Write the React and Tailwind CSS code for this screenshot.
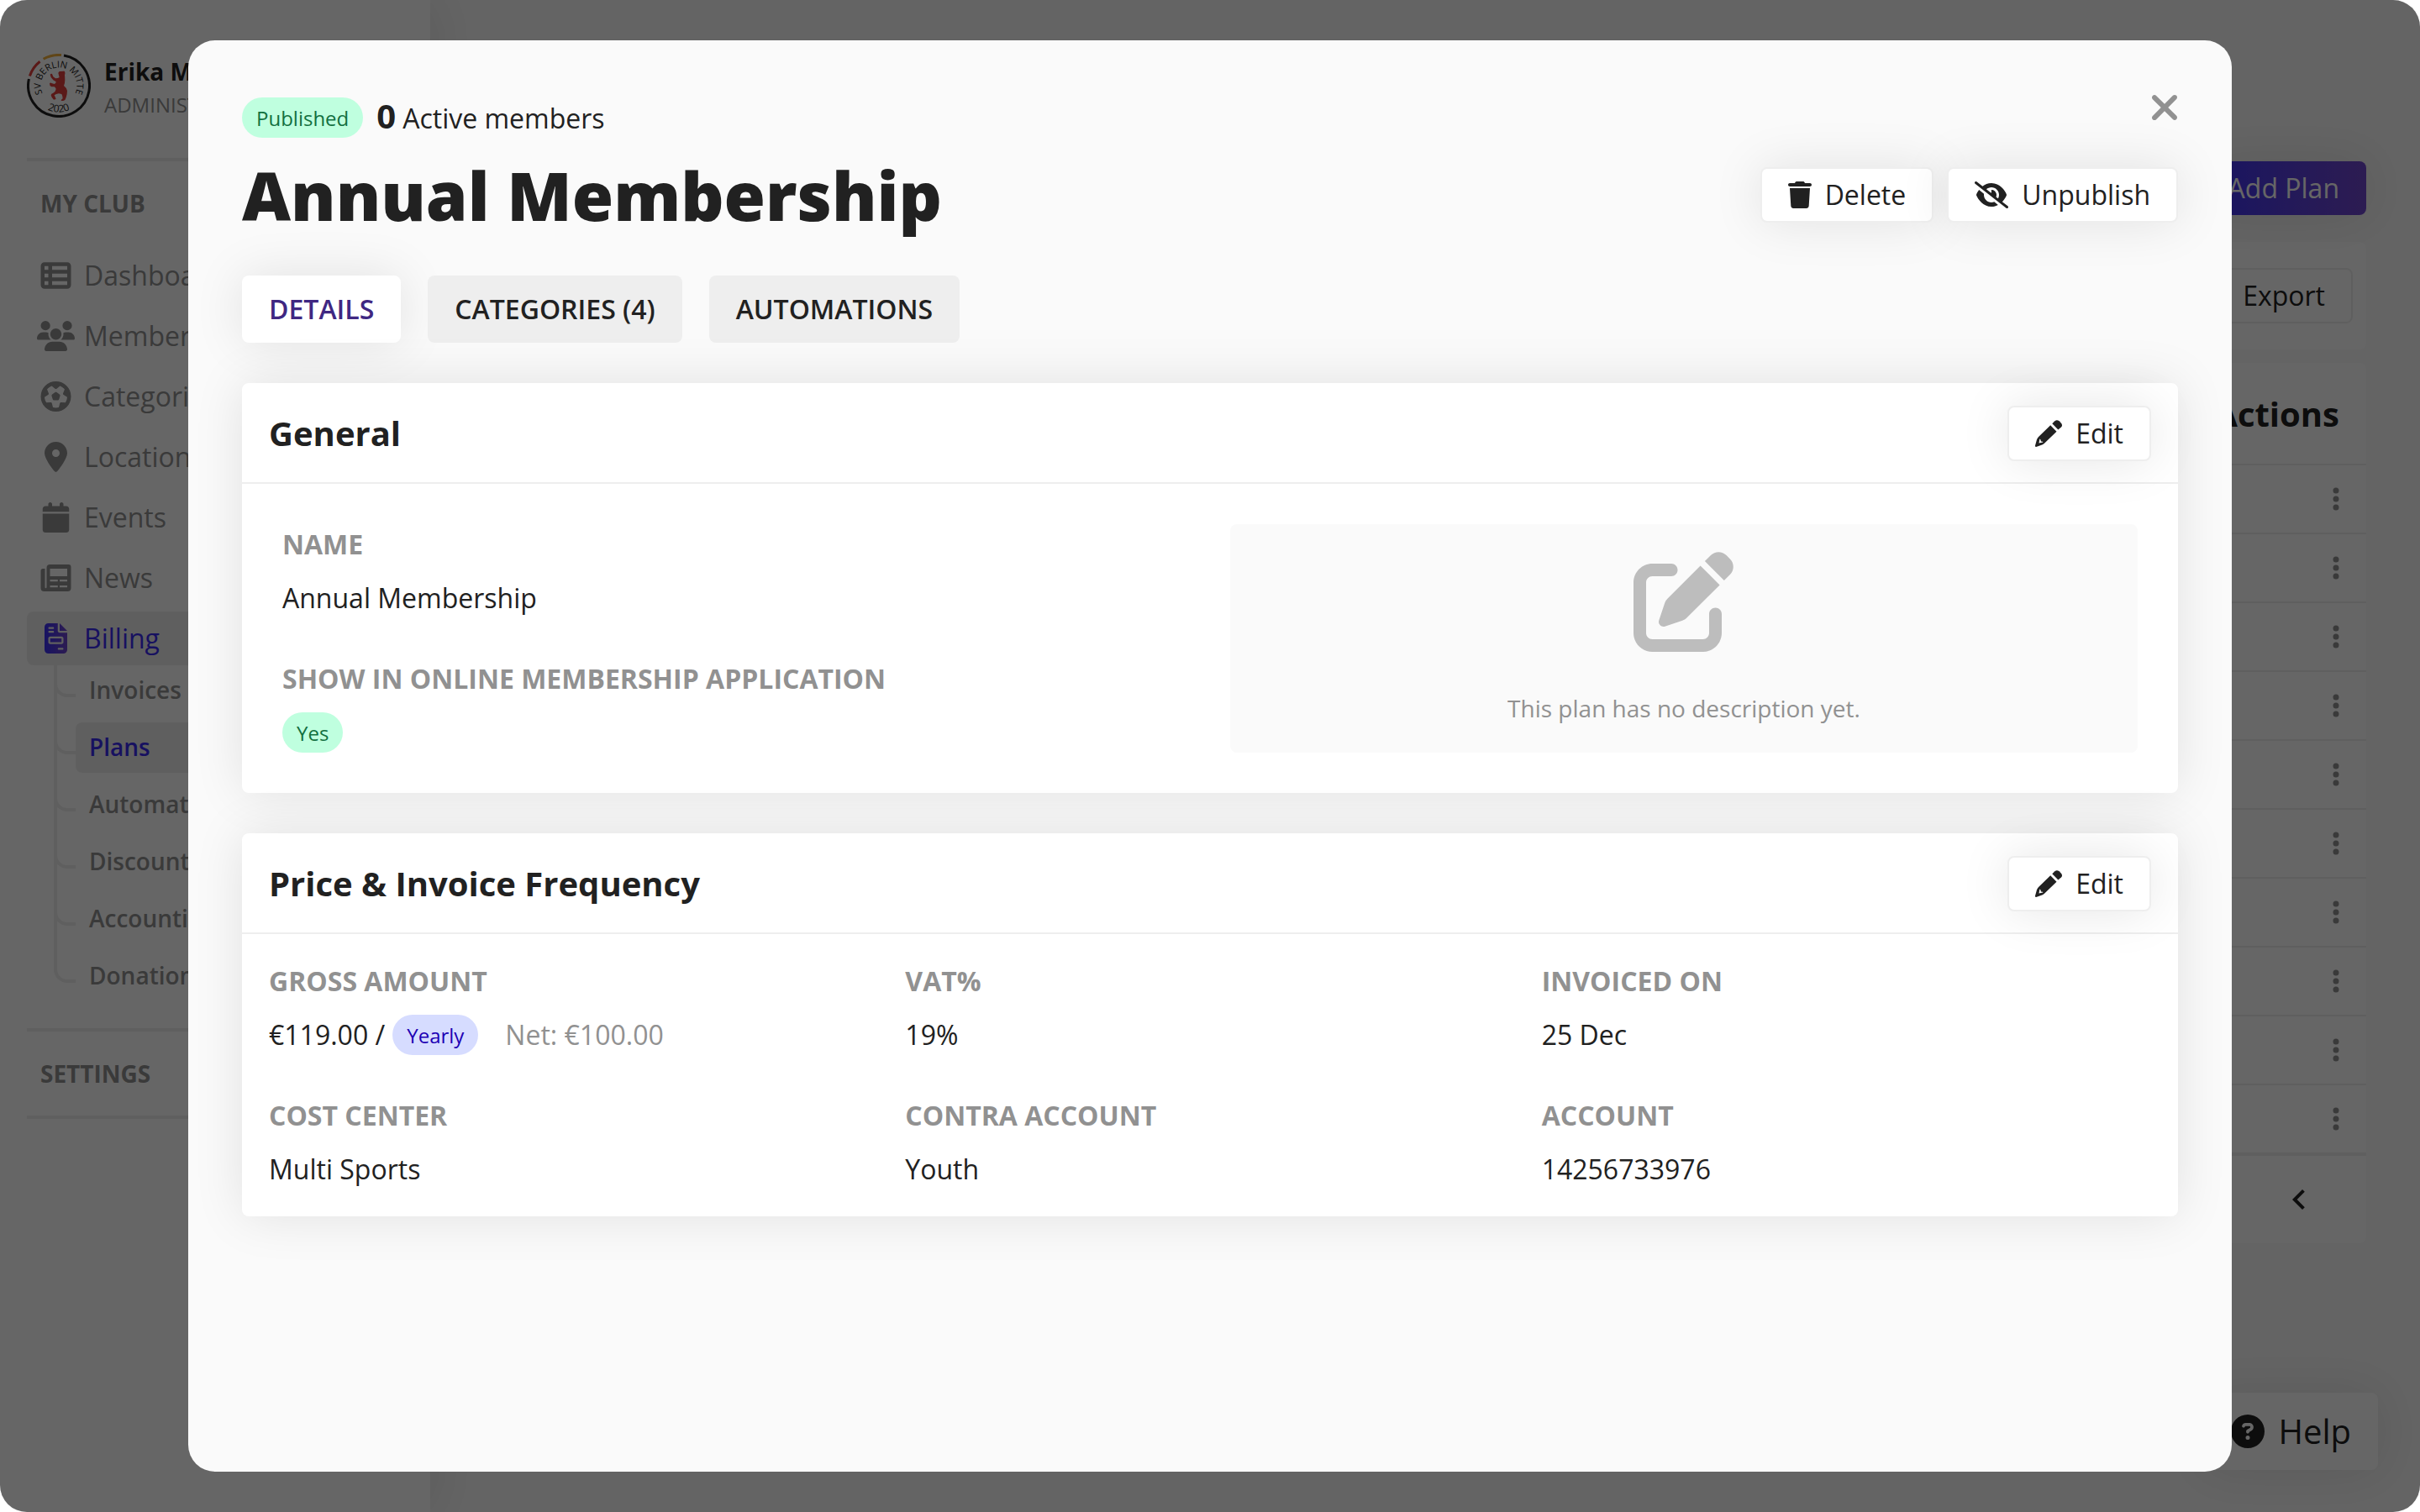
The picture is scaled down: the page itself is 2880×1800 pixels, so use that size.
import {
  FaCalendar,
  FaCircleQuestion,
  FaEllipsisVertical,
  FaEyeSlash,
  FaFileInvoice,
  FaFutbol,
  FaLocationDot,
  FaPenToSquare,
  FaTableList,
  FaTrash,
  FaUsers,
  FaXmark,
} from "react-icons/fa6";
import { MdChevronLeft } from "react-icons/md";

const navItems = [
  { label: "Dashboard", icon: FaTableList },
  { label: "Members", icon: FaUsers },
  { label: "Categories", icon: FaFutbol },
  { label: "Locations", icon: FaLocationDot },
  { label: "Events", icon: FaCalendar },
  { label: "News", icon: NewsIcon },
  { label: "Billing", icon: FaFileInvoice, active: true },
];

const billingItems = ["Invoices", "Plans", "Automations", "Discounts", "Accounting", "Donations"];

const tabs = ["Details", "Categories (4)", "Automations"];

const rows = Array.from({ length: 10 }, (_, i) => i);

const badgeStyles = {
  success: "bg-[#bfffdf] text-[#12703f]",
  info: "bg-[#d6dcff] text-[#1d00b4]",
};

const shadow = "shadow-[0_0_60px_rgba(0,0,0,0.1)]";

function NewsIcon(props) {
  return (
    <svg viewBox="0 -2 36 36" {...props}>
      <path
        fillRule="evenodd"
        d="M11 0 H33 Q36 0 36 3 V28 Q36 32 32 32 H4 Q0 32 0 28 V7.500 Q0 5 2.500 5 H5 V27 Q5 28.200 6 28.200 Q7 28.200 7 27 V4 Q7 0 11 0 Z M11 5 V14 H31.500 V5 Z M11 18 V20.200 H20.300 V18 Z M22.500 18 V20.200 H31.500 V18 Z M11 25 V27.200 H20.300 V25 Z M22.500 25 V27.200 H31.500 V25 Z"
      />
    </svg>
  );
}

function PencilIcon({ className }) {
  return (
    <svg viewBox="0 0 32 32" fill="currentColor" className={className}>
      <path d="M20.300 4.300 L23.400 1.200 Q25.900 -0.900 28.600 1.300 L31 3.700 Q33 6.200 31 8.500 L27.400 11.600 Z" />
      <path
        fillRule="evenodd"
        d="M18.200 6.300 L25.500 13.700 L11 27.700 Q9.800 29 8.300 29.400 L1.200 31.900 Q-0.300 32 0 30.500 L2 23.300 Q2.800 21.300 4.100 20 Z M5.400 22.500 L4.500 27.500 L9.400 26.600 L9 25.700 L6.900 25.500 L6.400 23.200 Z"
      />
    </svg>
  );
}

function ClubLogo() {
  return (
    <svg viewBox="0 0 76 76" className="h-[76px] w-[76px] shrink-0" role="img" aria-label="SV Berlin Mitte 2020">
      <defs>
        <path id="logo-top" d="M 38 59.5 A 21.5 21.5 0 1 1 38.01 59.5" />
        <path id="logo-bottom" d="M 6.500 38 A 31.5 31.5 0 0 0 69.5 38" />
      </defs>
      <g fill="none" strokeWidth="3">
        <path d="M 44 2 A 36.5 36.5 0 1 1 2.4 30" stroke="#222222" />
        <path d="M 3.4 26.5 A 36.5 36.5 0 0 1 15.5 9.2" stroke="#e2403c" />
        <path d="M 19.6 6.3 A 36.5 36.5 0 0 1 41 1.6" stroke="#f0ae3c" />
      </g>
      <g fill="#222222" fontFamily="'Open Sans', sans-serif" fontWeight="500" textAnchor="middle">
        <text fontSize="11">
          <textPath href="#logo-top" startOffset="50%">SV BERLIN MITTE</textPath>
        </text>
        <text fontSize="12">
          <textPath href="#logo-bottom" startOffset="50%">2020</textPath>
        </text>
      </g>
      <path
        transform="translate(-12 -12) scale(0.3333)"
        d="M148 104 L152 99 L166 98 Q172 97 172 103 Q173 107 171 112 Q172 122 172 130 Q172 142 168 150 Q178 158 180 168 Q180 182 176 192 Q174 202 166 204 L158 204 Q158 200 164 196 Q164 186 160 180 L150 178 Q140 180 134 184 Q138 192 140 198 L132 200 Q124 194 122 184 Q122 178 130 176 Q138 172 140 162 Q138 156 134 154 L124 154 Q116 150 117 142 Q120 138 124 141 L134 144 Q140 142 140 136 L130 130 Q120 122 119 110 Q122 106 126 108 L130 118 L138 124 Q148 124 152 120 L150 113 L149 109 Z"
        fill="#e2403c"
      />
    </svg>
  );
}

function Badge({ variant, children }) {
  return <span className={`inline-flex h-12 items-center rounded-full px-[17px] pt-px text-2xl ${badgeStyles[variant]}`}>{children}</span>;
}

function OutlineButton({ icon: Icon, iconClass = "h-8 w-8", className = "", children }) {
  return (
    <button
      type="button"
      className={`flex h-[66px] items-center gap-4 rounded-lg border-2 border-[#eeeeee] bg-white px-[31px] text-[32px] leading-none text-[#212121] ${className}`}
    >
      {Icon ? <Icon className={iconClass} /> : null}
      {children}
    </button>
  );
}

function Card({ title, children }) {
  return (
    <section className={`rounded-lg bg-white ${shadow}`}>
      <div className="flex h-[120px] items-center justify-between border-b-2 border-[#eeeeee] px-8 pt-0.5">
        <h2 className="text-[40px] leading-[60px] font-bold">{title}</h2>
        <OutlineButton icon={PencilIcon} className={shadow}>Edit</OutlineButton>
      </div>
      {children}
    </section>
  );
}

function Field({ label, children }) {
  return (
    <div className="flex flex-col gap-4 text-[32px] leading-[48px]">
      <dt className="font-bold text-[#919191] uppercase">{label}</dt>
      <dd className="flex items-center">{children}</dd>
    </div>
  );
}

function Sidebar() {
  return (
    <aside className="w-[512px] shrink-0 bg-white px-8 pt-16 shadow-[0_0_60px_rgba(0,0,0,0.1)]">
      <svg width="0" height="0" className="absolute">
        <linearGradient id="brand" x1="0" y1="0" x2="1" y2="0">
          <stop offset="0" stopColor="#3b30f5" />
          <stop offset="1" stopColor="#7046cc" />
        </linearGradient>
      </svg>
      <div className="flex h-[124px] items-start gap-4">
        <ClubLogo />
        <div className="flex flex-col">
          <p className="text-[28px] leading-[42px] font-bold text-[#212121]">Erika Mustermann</p>
          <p className="text-2xl leading-[38px] text-[#919191]">ADMINISTRATOR</p>
        </div>
      </div>
      <nav>
        <h2 className="flex h-[108px] items-center border-t-4 border-[#eeeeee] px-4 pb-1 text-[28px] font-bold text-[#919191]">MY CLUB</h2>
        <ul className="flex flex-col gap-2 text-[32px]">
          {navItems.map(({ label, icon: Icon, active }) => (
            <li key={label}>
              <a
                href="#"
                className={`flex h-16 items-center gap-4 rounded-lg px-4 ${active ? "bg-[#eeeeee] text-[#3b2bf0]" : "text-[#919191]"}`}
              >
                <span className="flex w-9 shrink-0 justify-center">
                  <Icon className="h-9 w-[45px] shrink-0" fill={active ? "url(#brand)" : "currentColor"} />
                </span>
                {label}
              </a>
            </li>
          ))}
        </ul>
        <ul className="mb-8 flex flex-col pl-8 text-[28px] font-semibold">
          {billingItems.map((label, i) => (
            <li key={label} className="relative pb-2 pl-[26px] last:pb-0">
              {i < billingItems.length - 1 ? <span className="absolute inset-y-0 left-0 w-1 bg-[#eeeeee]" /> : null}
              <span className="absolute top-0 left-0 h-[38px] w-[26px] rounded-bl-2xl border-b-4 border-l-4 border-[#eeeeee]" />
              <a
                href="#"
                className={`relative flex h-[60px] items-center rounded-lg px-4 pb-0.5 ${label === "Plans" ? "bg-[#eeeeee] text-[#3b2bf0]" : "text-[#919191]"}`}
              >
                {label}
              </a>
            </li>
          ))}
        </ul>
        <h2 className="flex h-[108px] items-center border-y-4 border-[#eeeeee] px-4 text-[28px] font-bold text-[#919191]">SETTINGS</h2>
      </nav>
    </aside>
  );
}

function PlansPage() {
  return (
    <main className="flex-1 px-16 pt-48">
      <div className="flex justify-end">
        <button type="button" className={`h-16 rounded-lg bg-linear-to-r from-[#3b30f5] to-[#7046cc] px-8 text-[32px] leading-none text-white ${shadow}`}>
          Add Plan
        </button>
      </div>
      <div className="mt-8 flex h-32 items-center justify-end rounded-lg bg-white px-4">
        <OutlineButton>Export</OutlineButton>
      </div>
      <div className="mt-4 rounded-lg bg-white">
        <table className="w-full border-separate border-spacing-0 text-right">
          <thead>
            <tr>
              <th className="h-[122px] border-b-2 border-[#eeeeee] px-8 pt-0.5 pb-0 text-[40px] leading-none font-bold">Actions</th>
            </tr>
          </thead>
          <tbody>
            {rows.map((row) => (
              <tr key={row}>
                <td className="h-[82px] border-b-2 border-[#eeeeee] px-8 py-0">
                  <button type="button" aria-label="Row actions" className="ml-auto block text-[#919191]">
                    <FaEllipsisVertical className="h-8 w-2" />
                  </button>
                </td>
              </tr>
            ))}
          </tbody>
        </table>
        <div className="flex h-[106px] items-center justify-end border-t-2 border-[#eeeeee] px-14">
          <button type="button" aria-label="Previous page">
            <MdChevronLeft className="h-12 w-12" />
          </button>
        </div>
      </div>
    </main>
  );
}

function PlanDialog() {
  return (
    <div role="dialog" aria-modal="true" aria-labelledby="plan-title" className="relative h-full overflow-hidden rounded-[32px] bg-[#fafafa] px-16 pt-[68px]">
      <button type="button" aria-label="Close" className="absolute top-14 right-14 text-[#919191]">
        <FaXmark className="h-12 w-12" />
      </button>
      <div className="flex items-center gap-4">
        <Badge variant="success">Published</Badge>
        <p className="flex items-baseline gap-2 pt-px text-[32px] leading-[47px]">
          <strong className="text-[40px] leading-none font-bold">0</strong>
          Active members
        </p>
      </div>
      <div className="mt-2 flex items-center justify-between">
        <h1 id="plan-title" className="text-[80px] leading-[120px] font-extrabold">Annual Membership</h1>
        <div className="flex gap-4">
          <OutlineButton icon={FaTrash} iconClass="h-8 w-7" className={shadow}>Delete</OutlineButton>
          <OutlineButton icon={FaEyeSlash} iconClass="h-8 w-10" className={shadow}>Unpublish</OutlineButton>
        </div>
      </div>
      <div role="tablist" className="mt-9 flex gap-8">
        {tabs.map((tab, i) => (
          <button
            key={tab}
            type="button"
            role="tab"
            aria-selected={i === 0}
            className={`h-20 rounded-lg px-8 text-[32px] leading-none font-semibold uppercase ${i === 0 ? `bg-white text-[#3f2782] ${shadow}` : "bg-[#eeeeee]"}`}
          >
            {tab}
          </button>
        ))}
      </div>
      <div className="mt-12 flex flex-col gap-12">
        <Card title="General">
          <div className="grid grid-cols-2 gap-12 p-12">
            <dl className="flex flex-col gap-12">
              <Field label="Name">Annual Membership</Field>
              <Field label="Show in online membership application">
                <Badge variant="success">Yes</Badge>
              </Field>
            </dl>
            <div className="flex flex-col items-center justify-between rounded-lg bg-[#fafafa] py-8">
              <FaPenToSquare className="h-[120px] w-[120px] text-[#bdbdbd]" />
              <p className="text-[28px] leading-[42px] text-[#919191]">This plan has no description yet.</p>
            </div>
          </div>
        </Card>
        <Card title="Price & Invoice Frequency">
          <dl className="grid grid-cols-3 gap-x-8 gap-y-12 p-8">
            <Field label="Gross amount">
              <span className="mr-[9px]">€119.00 /</span>
              <Badge variant="info">Yearly</Badge>
              <span className="ml-8 text-[#919191]">Net: €100.00</span>
            </Field>
            <Field label="VAT%">19%</Field>
            <Field label="Invoiced on">25 Dec</Field>
            <Field label="Cost center">Multi Sports</Field>
            <Field label="Contra account">Youth</Field>
            <Field label="Account">14256733976</Field>
          </dl>
        </Card>
      </div>
    </div>
  );
}

export default function App() {
  return (
    <div className="min-h-screen bg-white font-['Open_Sans',sans-serif] text-[#212121]">
      <div className="relative flex min-h-screen overflow-hidden rounded-[32px] bg-[#fafafa]">
        <Sidebar />
        <PlansPage />
        <button type="button" className={`absolute right-[50px] bottom-[50px] flex h-[92px] items-center gap-4 rounded-lg bg-white px-8 text-[40px] leading-none ${shadow}`}>
          <FaCircleQuestion className="h-10 w-10" />
          Help
        </button>
        <div className="absolute inset-0 bg-black/60 px-56 py-12">
          <PlanDialog />
        </div>
      </div>
    </div>
  );
}
